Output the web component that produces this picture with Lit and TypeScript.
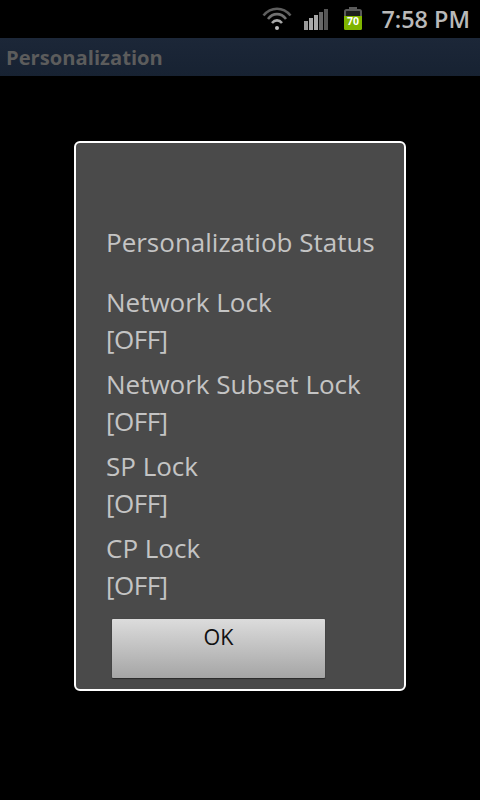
import { LitElement, html, css } from "lit";
import { customElement } from "lit/decorators.js";

@customElement("app-root")
export class AppRoot extends LitElement {
  static styles = css`
    :host { display: block; width: 480px; height: 800px; background: #000; font-family: "Open Sans", "Noto Sans", sans-serif; overflow: hidden; }
    .status { height: 38px; display: flex; align-items: center; justify-content: flex-end; box-sizing: border-box; padding-right: 10px; }
    .wifi { width: 30px; height: 24px; margin-right: 11px; }
    .signal { width: 26px; height: 22px; margin-right: 14px; }
    .batt { width: 20px; height: 24px; margin-right: 18px; }
    .time { color: #b9b9b9; font-size: 23.4px; font-weight: 600; line-height: 38px; }
    .title { height: 38px; background: linear-gradient(#1c2738, #172232); display: flex; align-items: center; padding-left: 6px; color: #5c5c5c; font-size: 20.2px; font-weight: 700; box-sizing: border-box; }
    .dialog { box-sizing: border-box; width: 332px; height: 550px; margin: 65px 0 0 74px; background: #4a4a4a; border: 2px solid #fff; border-radius: 6px; padding: 81px 0 0 30px; color: #c4c4c4; font-size: 26px; display: flex; flex-direction: column; }
    .line { height: 37px; line-height: 37px; white-space: nowrap; }
    .off { letter-spacing: -0.5px; }
    .head { margin-bottom: 23px; }
    .group { margin-bottom: 8px; }
    .group:last-of-type { margin-bottom: 0; }
    button { all: unset; box-sizing: border-box; display: flex; justify-content: center; width: 213px; height: 59px; margin: 15px 0 0 6px; padding-top: 1px; background: linear-gradient(#dcdcdc, #a5a5a5); color: #111; font-size: 21.5px; line-height: 34px; border-radius: 1px; box-shadow: 0 1px 1px #2a2a2a, 0 0 1px #333; }
  `;

  render() {
    const groups = ["Network Lock", "Network Subset Lock", "SP Lock", "CP Lock"];
    return html`
      <div class="status">
        <svg class="wifi" viewBox="0 0 30 24" fill="none" stroke-linecap="butt">
          <path d="M1.5 8.5C9 -0.5 21 -0.5 28.5 8.5" stroke="#5e5e5e" stroke-width="2.6"/>
          <path d="M6 12C11 5.5 19 5.5 24 12" stroke="#707070" stroke-width="2.6"/>
          <path d="M10 16C13 12.5 17 12.5 20 16" stroke="#a8a8a8" stroke-width="2.6"/>
          <circle cx="15" cy="21" r="2" fill="#bdbdbd"/>
        </svg>
        <svg class="signal" viewBox="0 0 26 22">
          <rect x="1" y="13" width="4" height="9" fill="#9a9a9a"/>
          <rect x="6" y="10" width="4" height="12" fill="#a8a8a8"/>
          <rect x="11" y="7" width="4" height="15" fill="#a8a8a8"/>
          <rect x="16" y="4" width="4" height="18" fill="#686868"/>
          <rect x="21" y="1" width="4" height="21" fill="#555"/>
        </svg>
        <svg class="batt" viewBox="0 0 20 24">
          <rect x="6" y="0" width="8" height="3" fill="#5a5a5a"/>
          <path d="M2 9V4.5Q2 3 3.5 3H16.5Q18 3 18 4.5V9" fill="#1c1c1c" stroke="#5a5a5a" stroke-width="2"/>
          <path d="M1 9H19V21.5Q19 23 17.5 23H2.5Q1 23 1 21.5z" fill="#7fb400"/>
          <text x="10" y="18" text-anchor="middle" font-size="10.5" font-weight="700" fill="#fff">70</text>
        </svg>
        <span class="time">7:58 PM</span>
      </div>
      <div class="title">Personalization</div>
      <div class="dialog">
        <div class="line head">Personalizatiob Status</div>
        ${groups.map(g => html`<div class="group"><div class="line">${g}</div><div class="line off">[OFF]</div></div>`)}
        <button>OK</button>
      </div>
    `;
  }
}
